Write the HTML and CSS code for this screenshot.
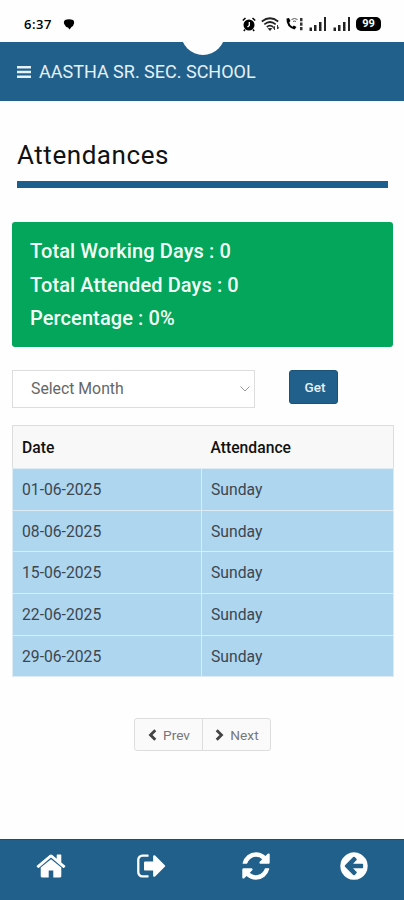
FILE: index.html
```html
<!DOCTYPE html>
<html lang="en">
<head>
    <meta charset="UTF-8">
    <meta name="viewport" content="width=device-width, initial-scale=1.0">
    <title>Attendances</title>
    <link rel="stylesheet" href="styles.css">
</head>
<body>

<div class="status-bar">
    <span class="clock">6:37</span>
    <svg class="chat" width="12" height="11" viewBox="0 0 12 11"><path d="M2 1Q6-.3 10 1q1.500 1 1 3.500Q10.500 7 8.500 8L6.500 10.500 5 8.500Q2.500 8 1.500 5.500 0 3 2 1z"/></svg>
    <div class="status-icons">
        <svg width="14" height="15" viewBox="0 0 14 15"><circle cx="7" cy="8" r="5.500"/><path d="M.8 3.500 3.500 1M13.200 3.500 10.500 1M3 12.500 1.800 14M11 12.500l1.200 1.500" stroke="#000" stroke-width="1.500"/><path d="M7.300 5v3.400L5.500 10" fill="none" stroke="#fff" stroke-width="1.300"/></svg>
        <svg width="19" height="14" viewBox="0 0 19 14"><g fill="none" stroke="#222" stroke-width="1.700"><path d="M.8 4.500Q9 -2 17.200 4.500M3.300 7.300q5.700-4.600 11.400 0M5.800 10q3.200-2.600 6.400 0"/></g><path d="M7.300 11.500 9 13.500l1.700-2zM13.500 13V9.500l-1.300 1.500M16.500 8v4l1.200-1.300" stroke="#222" stroke-width=".8"/></svg>
        <svg width="19" height="14" viewBox="0 0 19 14"><path d="M1.500 1.500Q1 10 9.500 12.500l2-2.500L8.800 8.500 7.500 9.800Q4.500 8 4.200 5.300L5.500 4 4 1z"/><path d="M6.500 2.500q3-2 6 0M8 4.500q1.500-1 3 0" fill="none" stroke="#555" stroke-width="1"/><path d="M15 1h2.500v3.300H15zM15 5.500h2.500v3.300H15zM15 10h2.500v3.300H15z" fill="#333"/></svg>
        <svg width="18" height="14" viewBox="0 0 18 14"><path d="M.5 10.500h2.500V14H.5zM5 8h2.500v6H5zM10 5h2.500v9H10zM15 0h2v14h-2z" fill="#222"/></svg>
        <svg width="18" height="14" viewBox="0 0 18 14"><path d="M.5 10.500h2.500V14H.5zM5 8h2.500v6H5zM10 5h2.500v9H10zM15 0h2v14h-2z" fill="#222"/></svg>
        <span class="battery">99</span>
    </div>
</div>

<div class="header">
    <div class="notch"></div>
    <svg width="14" height="12" viewBox="0 0 14 12"><path d="M0 0h14v2.600H0zM0 4.700h14v2.600H0zM0 9.400h14v2.600H0z" fill="#e4f1f8"/></svg>
    <span class="school">AASTHA SR. SEC. SCHOOL</span>
</div>

<div class="content">
    <h2 class="page-title">Attendances</h2>

    <div class="summary">
        <p>Total Working Days : 0</p>
        <p>Total Attended Days : 0</p>
        <p>Percentage : 0%</p>
    </div>

    <div class="filter">
        <div class="month-select">
            <span>Select Month</span>
            <svg width="10" height="6" viewBox="0 0 10 6"><path d="M.5.500 5 5 9.500.5" fill="none" stroke="#999"/></svg>
        </div>
        <button class="get-button">Get</button>
    </div>

    <table class="attendance">
        <thead>
            <tr><th class="date-col">Date</th><th>Attendance</th></tr>
        </thead>
        <tbody>
            <tr><td>01-06-2025</td><td>Sunday</td></tr>
            <tr><td>08-06-2025</td><td>Sunday</td></tr>
            <tr><td>15-06-2025</td><td>Sunday</td></tr>
            <tr><td>22-06-2025</td><td>Sunday</td></tr>
            <tr><td>29-06-2025</td><td>Sunday</td></tr>
        </tbody>
    </table>

    <div class="pager">
        <button>
            <svg width="9" height="12" viewBox="0 0 9 12"><path d="M7.300 1.200 2.500 6l4.800 4.800" fill="none" stroke="#444" stroke-width="2.800"/></svg>
            Prev
        </button>
        <button>
            <svg width="9" height="12" viewBox="0 0 9 12"><path d="M1.700 1.200 6.500 6l-4.800 4.800" fill="none" stroke="#444" stroke-width="2.800"/></svg>
            Next
        </button>
    </div>
</div>

<div class="bottom-nav">
    <a><svg viewBox="0 0 1792 1792"><path d="M1472 992v480q0 26-19 45t-45 19h-384v-384h-256v384h-384q-26 0-45-19t-19-45v-480q0-1 .5-3t.5-3l575-474 575 474q1 2 1 6zm223-69l-62 74q-8 9-21 11h-3q-13 0-21-7l-692-577-692 577q-12 8-24 7-13-2-21-11l-62-74q-8-10-7-23.500t11-21.500l719-599q32-26 76-26t76 26l244 204v-195q0-14 9-23t23-9h192q14 0 23 9t9 23v408l219 182q10 8 11 21.500t-7 23.500z"/></svg></a>
    <a><svg viewBox="0 0 1792 1792"><path d="M704 1440q0 4 1 20t.5 26.500-3 23.500-10 19.500-20.500 6.500h-320q-119 0-203.500-84.500t-84.500-203.500v-704q0-119 84.500-203.500t203.500-84.500h320q13 0 22.500 9.500t9.500 22.500q0 4 1 20t.5 26.500-3 23.500-10 19.500-20.500 6.500h-320q-66 0-113 47t-47 113v704q0 66 47 113t113 47h312l11.500 1 11.500 3 8 5.500 7 9 2 13.500zm928-544q0 26-19 45l-544 544q-19 19-45 19t-45-19-19-45v-288h-448q-26 0-45-19t-19-45v-384q0-26 19-45t45-19h448v-288q0-26 19-45t45-19 45 19l544 544q19 19 19 45z"/></svg></a>
    <a class="refresh"><svg viewBox="0 0 1792 1792"><path d="M1639 1056q0 5-1 7-64 268-268 434.500t-478 166.500q-146 0-282.500-55t-243.500-157l-129 129q-19 19-45 19t-45-19-19-45v-448q0-26 19-45t45-19h448q26 0 45 19t19 45-19 45l-137 137q71 66 161 102t187 36q134 0 250-65t186-179q11-17 53-117 8-23 30-23h192q13 0 22.500 9.500t9.500 22.500zm25-800v448q0 26-19 45t-45 19h-448q-26 0-45-19t-19-45 19-45l138-138q-148-137-349-137-134 0-250 65t-186 179q-11 17-53 117-8 23-30 23h-199q-13 0-22.500-9.500t-9.500-22.500v-7q65-268 270-434.500t480-166.500q146 0 284 55.500t245 156.500l130-129q19-19 45-19t45 19 19 45z"/></svg></a>
    <a><svg viewBox="0 0 1792 1792"><path d="M1408 960v-128q0-26-19-45t-45-19h-502l189-189q19-19 19-45t-19-45l-91-91q-18-18-45-18t-45 18l-362 362-91 91q-18 18-18 45t18 45l91 91 362 362q18 18 45 18t45-18l91-91q18-18 18-45t-18-45l-189-189h502q26 0 45-19t19-45zm256-64q0 209-103 385.500t-279.500 279.500-385.500 103-385.500-103-279.500-279.500-103-385.500 103-385.500 279.500-279.500 385.500-103 385.500 103 279.500 279.500 103 385.500z"/></svg></a>
</div>

</body>
</html>
```
FILE: styles.css
```css
body {
    font-family: Roboto, sans-serif;
    background-color: #fefefe;
    margin: 0;
    height: 900px;
    display: flex;
    flex-direction: column;
    overflow: hidden;
}
svg {
    display: block;
    flex: none;
}
.status-bar {
    display: flex;
    align-items: center;
    height: 42px;
    padding: 6px 23px 0 24px;
    box-sizing: border-box;
}
.clock {
    font-family: "Open Sans", sans-serif;
    font-size: 13px;
    font-weight: 600;
    letter-spacing: 0.5px;
    width: 39px;
}
.status-icons {
    display: flex;
    align-items: center;
    gap: 5.3px;
    margin-left: auto;
}
.battery {
    background-color: #000;
    color: #fff;
    font-size: 11px;
    font-weight: bold;
    line-height: 14px;
    width: 25px;
    border-radius: 5px;
    text-align: center;
}
.header {
    position: relative;
    display: flex;
    align-items: center;
    gap: 8px;
    height: 59px;
    padding-left: 17px;
    background-color: #22608c;
    box-sizing: border-box;
    overflow: hidden;
}
.notch {
    position: absolute;
    left: 181px;
    top: -31px;
    width: 44px;
    height: 44px;
    border-radius: 50%;
    background-color: #fefefe;
}
.school {
    color: #e4f1f8;
    font-size: 18px;
}
.content {
    flex: 1;
    padding: 0 11px 0 12px;
}
.page-title {
    margin: 36px 5px 34px;
    padding-bottom: 8px;
    border-bottom: 7px solid #1d5f8c;
    font-size: 26px;
    font-weight: 400;
    letter-spacing: 0.55px;
    line-height: 36px;
    color: #111;
}
.summary {
    height: 125px;
    padding: 13px 18px;
    box-sizing: border-box;
    background-color: #03a65a;
    border-radius: 3px;
    color: #f2fff6;
    font-size: 20px;
    font-weight: 500;
    letter-spacing: 0.1px;
}
.summary p {
    margin: 0;
    line-height: 33.5px;
}
.filter {
    display: flex;
    align-items: flex-start;
    gap: 34px;
    margin-top: 23px;
}
.month-select {
    display: flex;
    align-items: center;
    justify-content: space-between;
    width: 243px;
    height: 38px;
    padding: 0 4px 1px 18px;
    border: 1px solid #ddd;
    box-sizing: border-box;
    background-color: #fff;
    color: #666;
    font-size: 15.8px;
}
.get-button {
    width: 49px;
    height: 34px;
    padding: 0 0 0 3px;
    border: 1px solid #1a527a;
    border-radius: 3px;
    background-color: #22608c;
    color: #e4f1f8;
    font: 500 13.5px Roboto, sans-serif;
}
.attendance {
    width: 382px;
    margin-top: 17px;
    border-collapse: collapse;
    table-layout: fixed;
    font-size: 15.7px;
    border: 1px solid #ddd;
}
.attendance th,
.attendance td {
    height: 41.7px;
    padding: 0 9px;
    box-sizing: border-box;
    text-align: left;
}
.attendance th {
    height: 43px;
    background-color: #f8f8f8;
    color: #111;
    font-size: 15.7px;
    font-weight: 500;
}
.attendance .date-col {
    width: 189px;
}
.attendance td {
    background-color: #aed6ef;
    border: 1px solid #dcebf4;
    color: #3c4650;
}
.pager {
    display: flex;
    justify-content: center;
    margin-top: 41px;
}
.pager button {
    display: flex;
    align-items: center;
    justify-content: center;
    gap: 6px;
    width: 69px;
    height: 33px;
    padding: 0 0 0 1px;
    border: 1px solid #ddd;
    border-radius: 0 3px 3px 0;
    background-color: #fafafa;
    color: #777;
    font: 13.7px Roboto, sans-serif;
}
.pager button:first-child {
    border-radius: 3px 0 0 3px;
    margin-right: -1px;
}
.bottom-nav {
    display: grid;
    grid-template-columns: repeat(4, 1fr);
    height: 61px;
    background-color: #22608c;
    border-top: 1px solid #174e75;
    box-sizing: border-box;
}
.bottom-nav a {
    display: flex;
    justify-content: center;
    padding-top: 10px;
}
.bottom-nav svg {
    width: 32px;
    height: 32px;
    fill: #fff;
}
.bottom-nav .refresh {
    padding-left: 7px;
}
```
